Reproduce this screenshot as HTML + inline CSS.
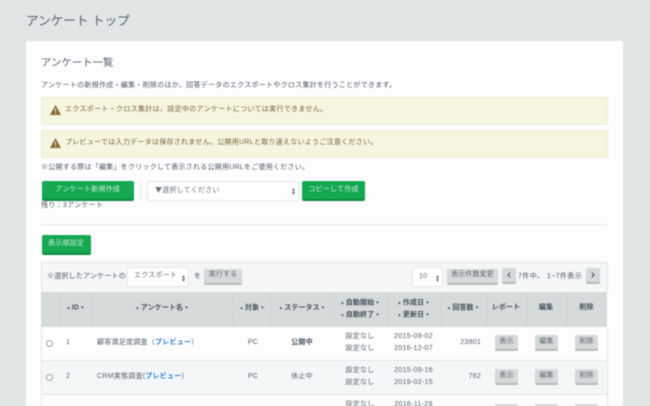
<!DOCTYPE html>
<html lang="ja">
<head>
<meta charset="utf-8">
<style>
html,body{margin:0;padding:0;width:650px;height:406px;overflow:hidden;background:#e1e5e6}
#r{position:absolute;left:0;top:0;width:650px;height:406px;overflow:hidden;filter:blur(.4px);font-family:"Liberation Sans","Noto Sans CJK JP",sans-serif;color:#4f5a66;font-size:7px;line-height:10px}
.a{position:absolute;white-space:nowrap}
.t{letter-spacing:.26px}
.b{position:absolute;box-sizing:border-box;background:#14a850;border-bottom:2px solid #0f8a42;border-radius:2px;color:#cfeedd;text-align:center;white-space:nowrap;letter-spacing:.22px;font-size:7px}
.g{position:absolute;box-sizing:border-box;background:#d5d9d9;border-bottom:2px solid #b4baba;border-radius:2px;color:#5f6973;text-align:center;white-space:nowrap;letter-spacing:.1px;font-size:7px}
.al{position:absolute;left:41px;width:567px;height:28px;box-sizing:border-box;background:#f6f5e0;border:1px solid #eeedd3;border-radius:2px}
.al svg{position:absolute;left:8px;top:7px}
.al span{position:absolute;left:23px;top:7px;color:#75633a;white-space:nowrap;letter-spacing:.32px}
.sel{position:absolute;box-sizing:border-box;background:#fff;border:1px solid #e3e6e8;border-radius:2px;white-space:nowrap;letter-spacing:.22px}
.ar{position:absolute;width:3px;height:7px}
.v{position:absolute;top:292px;height:35px;width:1px;background:#cdd4d4}
.h{position:absolute;font-weight:bold;color:#46515b;text-align:center;white-space:nowrap;letter-spacing:.1px}
.h i{font-style:normal;font-size:5px;font-weight:normal;vertical-align:.5px}
.tc{position:absolute;text-align:center;white-space:nowrap;letter-spacing:.25px;color:#55606a}
.rd{position:absolute;left:46px;width:5px;height:5px;border:1px solid #9aa1a6;border-radius:50%;background:#fff}
.ln{color:#2f7fd6;font-weight:bold}
</style>
</head>
<body>
<div id="r">
<div class="a" style="left:26px;top:14px;font-size:12.600px;line-height:15px;color:#56616c;letter-spacing:0">アンケート トップ</div>
<div class="a" style="left:26px;top:41px;width:597px;height:380px;background:#fdfdfd;border-radius:2px"></div>

<div class="a" style="left:41px;top:57px;font-size:10.400px;line-height:14px;color:#5a6571">アンケート一覧</div>
<div class="a" style="left:41px;top:81px;letter-spacing:.28px">アンケートの新規作成・編集・削除のほか、回答データのエクスポートやクロス集計を行うことができます。</div>

<div class="al" style="top:97px"><svg width="11" height="10" viewBox="0 0 11 10"><path d="M5.500 0 11 10H0Z" fill="#856a35"/><path d="M5 3.500h1v3.500H5zM5 7.800h1v1H5z" fill="#f6f5e0"/></svg><span>エクスポート・クロス集計は、設定中のアンケートについては実行できません。</span></div>
<div class="al" style="top:130px"><svg width="11" height="10" viewBox="0 0 11 10"><path d="M5.500 0 11 10H0Z" fill="#856a35"/><path d="M5 3.500h1v3.500H5zM5 7.800h1v1H5z" fill="#f6f5e0"/></svg><span style="letter-spacing:.28px">プレビューでは入力データは保存されません。公開用URLと取り違えないようご注意ください。</span></div>

<div class="a" style="left:41px;top:163px;letter-spacing:.25px">※公開する際は「編集」をクリックして表示される公開用URLをご使用ください。</div>

<div class="b" style="left:41.500px;top:181px;width:92.500px;height:20px;line-height:18px">アンケート新規作成</div>
<div class="a" style="left:140px;top:182px;width:1px;height:18px;background:#e2e5e6"></div>
<div class="sel" style="left:147px;top:181px;width:152px;height:20px;line-height:17px;padding-left:7px;color:#666f78"><span style="font-family:'Noto Sans CJK JP',sans-serif">▼</span>選択してください
<svg class="ar" style="left:144px;top:6px" viewBox="0 0 3 7"><path d="M1.500 0 3 3H0ZM0 4h3L1.500 7Z" fill="#666"/></svg></div>
<div class="b" style="left:302px;top:181px;width:63px;height:20px;line-height:18px">コピーして作成</div>
<div class="a" style="left:41px;top:201px;letter-spacing:.3px">残り：3アンケート</div>
<div class="a" style="left:41px;top:224px;width:567px;height:1px;background:#e2e6e7"></div>

<div class="b" style="left:41.500px;top:235px;width:49px;height:20px;line-height:17px">表示順設定</div>

<div class="a" style="left:41px;top:262px;width:567px;height:30px;box-sizing:border-box;background:#f4f6f7;border:1px solid #e2e6e7;border-bottom:0"></div>
<div class="a" style="left:47px;top:272px;letter-spacing:.2px">※選択したアンケートの</div>
<div class="sel" style="left:127px;top:267px;width:62px;height:20px;line-height:16px;padding-left:6px;color:#666f78">エクスポート
<svg class="ar" style="left:54px;top:7px" viewBox="0 0 3 7"><path d="M1.500 0 3 3H0ZM0 4h3L1.500 7Z" fill="#666"/></svg></div>
<div class="a" style="left:194px;top:272px">を</div>
<div class="g" style="left:204px;top:269px;width:38px;height:16px;line-height:12px">実行する</div>
<div class="sel" style="left:412px;top:267px;width:31px;height:20px;line-height:18px;padding-left:6px;color:#666f78">10
<svg class="ar" style="left:23px;top:7px" viewBox="0 0 3 7"><path d="M1.500 0 3 3H0ZM0 4h3L1.500 7Z" fill="#666"/></svg></div>
<div class="g" style="left:447px;top:269px;width:51px;height:16px;line-height:12px">表示件数変更</div>
<div class="g" style="left:502px;top:268px;width:14px;height:16px"><svg style="position:absolute;left:5px;top:4px" width="4" height="6" viewBox="0 0 4 6"><path d="M3.200.6.900 3l2.300 2.400" fill="none" stroke="#4e5963" stroke-width="1.100"/></svg></div>
<div class="a" style="left:518px;top:272px;letter-spacing:.4px">7件中、 1~7件表示</div>
<div class="g" style="left:586px;top:268px;width:14px;height:16px"><svg style="position:absolute;left:5px;top:4px" width="4" height="6" viewBox="0 0 4 6"><path d="M.8.600 3.100 3 .8 5.400" fill="none" stroke="#4e5963" stroke-width="1.100"/></svg></div>

<div class="a" style="left:41px;top:292px;width:566px;height:35px;background:#d5dbdb"></div>
<div class="v" style="left:60px"></div><div class="v" style="left:91px"></div><div class="v" style="left:233px"></div><div class="v" style="left:271px"></div><div class="v" style="left:333px"></div><div class="v" style="left:387px"></div><div class="v" style="left:440px"></div><div class="v" style="left:486px"></div><div class="v" style="left:526px"></div><div class="v" style="left:566px"></div>

<div class="h" style="left:60px;width:31px;top:303px"><i>▴</i> ID <i>▾</i></div>
<div class="h" style="left:91px;width:142px;top:303px"><i>▴</i> アンケート名 <i>▾</i></div>
<div class="h" style="left:233px;width:38px;top:303px"><i>▴</i> 対象 <i>▾</i></div>
<div class="h" style="left:271px;width:62px;top:303px"><i>▴</i> ステータス <i>▾</i></div>
<div class="h" style="left:333px;width:54px;top:296.500px;line-height:12px"><i>▴</i> 自動開始 <i>▾</i><br><i>▴</i> 自動終了 <i>▾</i></div>
<div class="h" style="left:387px;width:53px;top:296.500px;line-height:12px"><i>▴</i> 作成日 <i>▾</i><br><i>▴</i> 更新日 <i>▾</i></div>
<div class="h" style="left:440px;width:46px;top:303px"><i>▴</i> 回答数 <i>▾</i></div>
<div class="h" style="left:486px;width:40px;top:303px">レポート</div>
<div class="h" style="left:526px;width:40px;top:303px">編集</div>
<div class="h" style="left:566px;width:41px;top:303px">削除</div>

<div class="a" style="left:41px;top:327px;width:566px;height:33px;background:#fdfdfd"></div>
<div class="a" style="left:41px;top:360px;width:566px;height:1px;background:#dfe5e6"></div>
<div class="a" style="left:41px;top:361px;width:566px;height:33px;background:#f4f7f8"></div>
<div class="a" style="left:41px;top:394px;width:566px;height:1px;background:#dfe5e6"></div>
<div class="a" style="left:41px;top:327px;width:1px;height:79px;background:#e2e6e7"></div>
<div class="a" style="left:607px;top:327px;width:1px;height:79px;background:#e2e6e7"></div>

<div class="rd" style="top:340px"></div>
<div class="tc" style="left:66px;top:337.500px">1</div>
<div class="tc" style="left:97px;top:337.500px">顧客満足度調査（<span class="ln">プレビュー</span>）</div>
<div class="tc" style="left:233px;width:40px;top:337.500px">PC</div>
<div class="tc" style="left:271px;width:62px;top:337.500px;font-weight:bold;color:#46515b">公開中</div>
<div class="tc" style="left:333px;width:54px;top:331px;line-height:11.500px;letter-spacing:.3px">設定なし<br>設定なし</div>
<div class="tc" style="left:387px;width:53px;top:331px;line-height:11.500px;letter-spacing:.3px">2015-09-02<br>2016-12-07</div>
<div class="tc" style="left:440px;width:41px;top:337.500px;text-align:right">23801</div>
<div class="g" style="left:495px;top:335px;width:23px;height:16px;line-height:13px">表示</div>
<div class="g" style="left:535px;top:335px;width:23px;height:16px;line-height:13px">編集</div>
<div class="g" style="left:575px;top:335px;width:23px;height:16px;line-height:13px">削除</div>

<div class="rd" style="top:374px"></div>
<div class="tc" style="left:66px;top:371.500px">2</div>
<div class="tc" style="left:97px;top:371.500px">CRM実態調査(<span class="ln">プレビュー</span>)</div>
<div class="tc" style="left:233px;width:40px;top:371.500px">PC</div>
<div class="tc" style="left:271px;width:62px;top:371.500px">休止中</div>
<div class="tc" style="left:333px;width:54px;top:365px;line-height:11.500px;letter-spacing:.3px">設定なし<br>設定なし</div>
<div class="tc" style="left:387px;width:53px;top:365px;line-height:11.500px;letter-spacing:.3px">2015-09-16<br>2019-02-15</div>
<div class="tc" style="left:440px;width:41px;top:371.500px;text-align:right">762</div>
<div class="g" style="left:495px;top:369px;width:23px;height:16px;line-height:13px">表示</div>
<div class="g" style="left:535px;top:369px;width:23px;height:16px;line-height:13px">編集</div>
<div class="g" style="left:575px;top:369px;width:23px;height:16px;line-height:13px">削除</div>

<div class="tc" style="left:333px;width:54px;top:399px;line-height:11.500px;letter-spacing:.3px">設定なし</div>
<div class="tc" style="left:387px;width:53px;top:399px;line-height:11.500px;letter-spacing:.3px">2016-11-29</div>
<div class="g" style="left:495px;top:404px;width:23px;height:16px"></div>
<div class="g" style="left:535px;top:404px;width:23px;height:16px"></div>
<div class="g" style="left:575px;top:404px;width:23px;height:16px"></div>
</div>
</body>
</html>
